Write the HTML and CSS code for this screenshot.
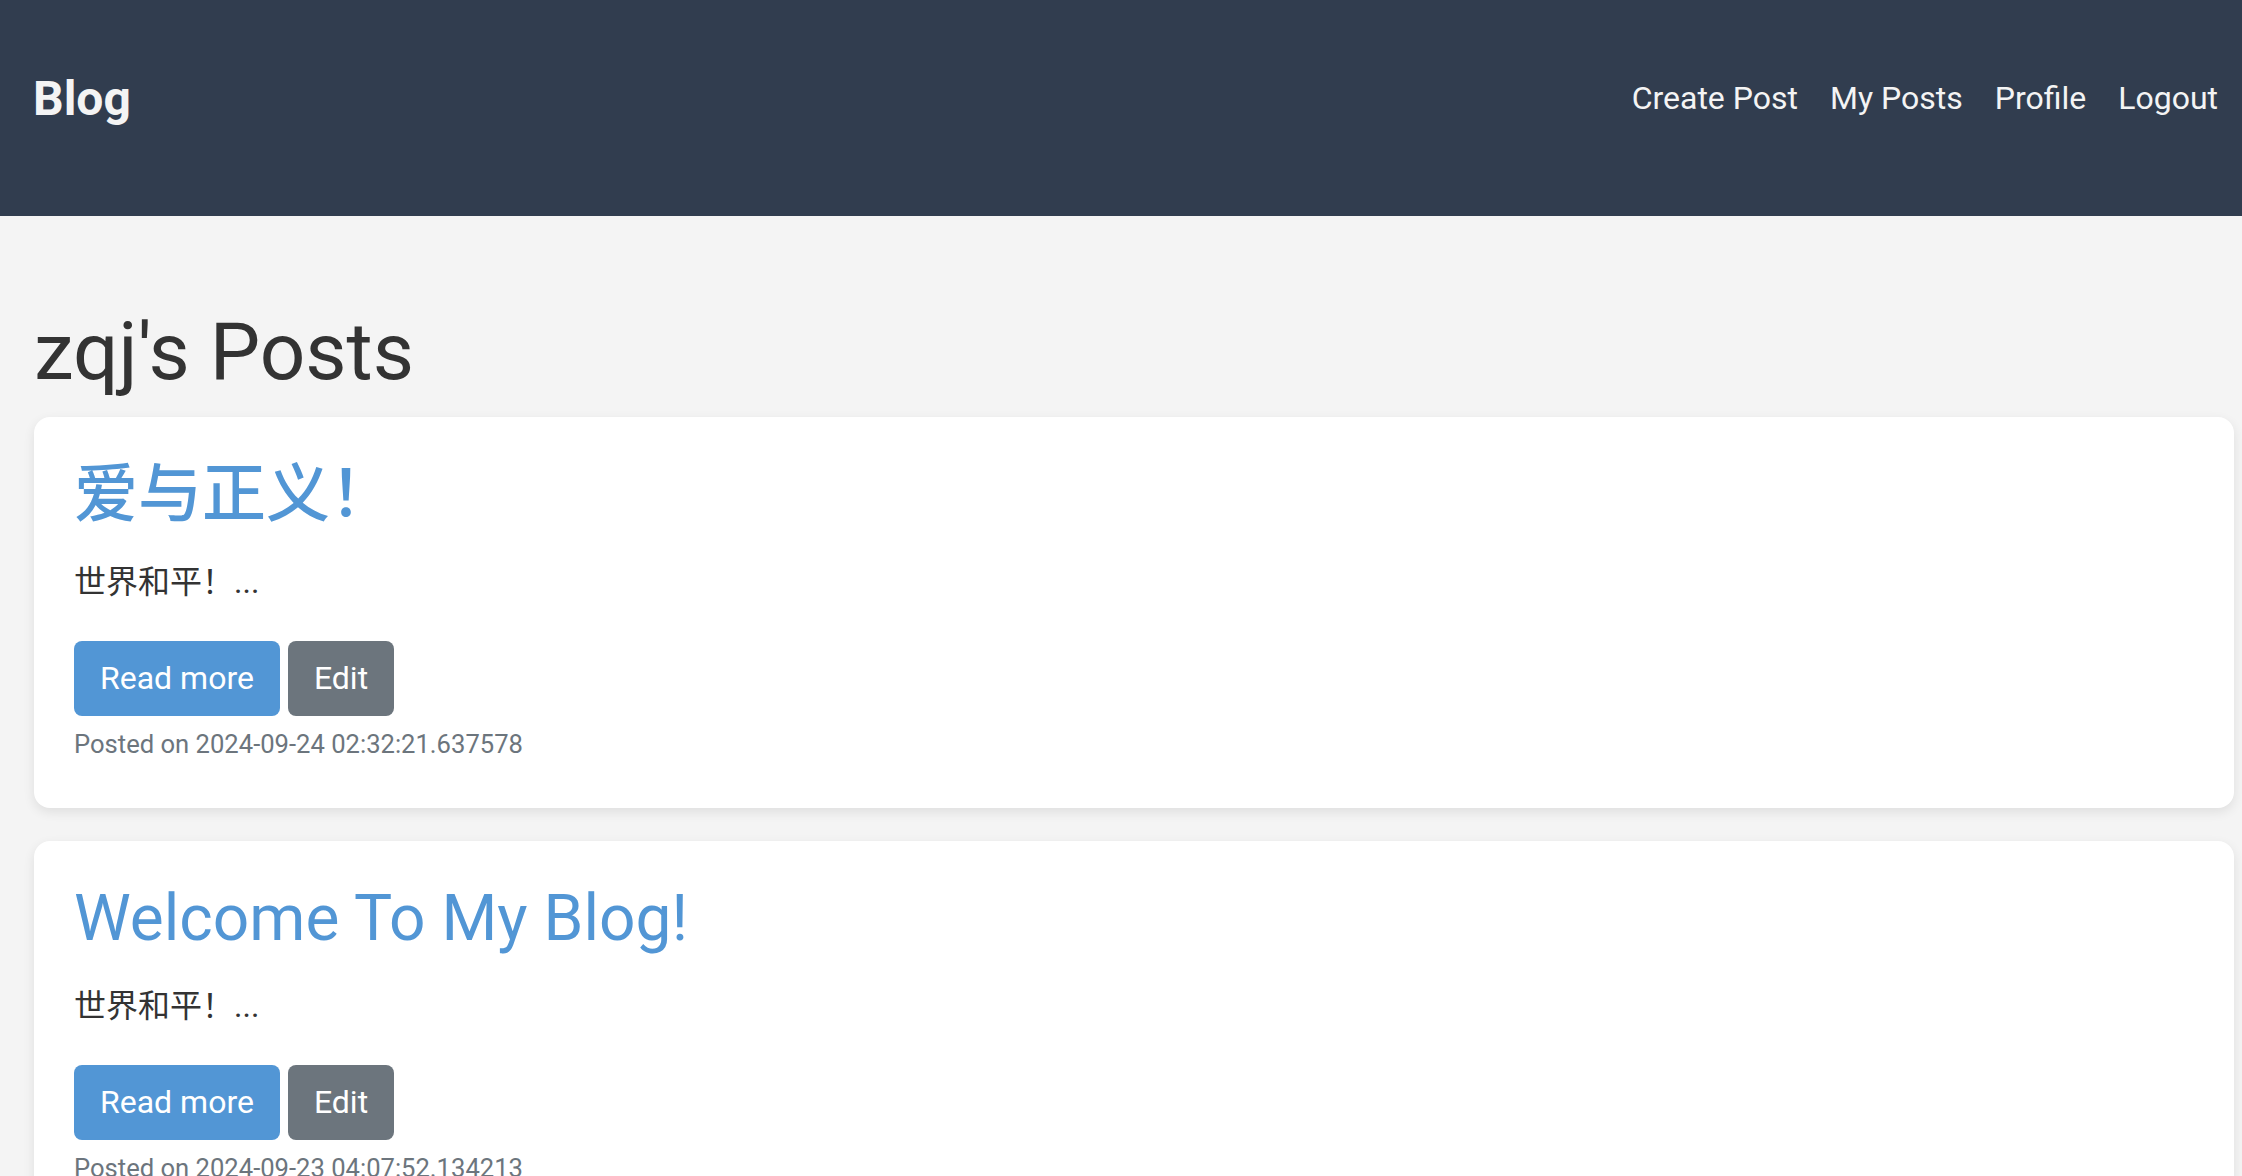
FILE: index.html
```html
<!DOCTYPE html>
<html lang="zh">
<head>
<meta charset="utf-8">
<title>Blog</title>
<link rel="stylesheet" href="styles.css">
</head>
<body>
<header class="site-header">
  <h1 class="brand">Blog</h1>
  <nav class="nav">
    <a href="#" class="nav-link">Create Post</a>
    <a href="#" class="nav-link">My Posts</a>
    <a href="#" class="nav-link">Profile</a>
    <a href="#" class="nav-link">Logout</a>
  </nav>
</header>
<main class="content">
  <h1 class="page-title">zqj's Posts</h1>
  <article class="card">
    <h2 class="card-title"><span class="cjk">爱与正义！</span></h2>
    <p class="card-text">世界和平！...</p>
    <div class="actions">
      <a href="#" class="btn btn-primary">Read more</a>
      <a href="#" class="btn btn-secondary">Edit</a>
    </div>
    <div class="meta">Posted on 2024-09-24 02:32:21.637578</div>
  </article>
  <article class="card">
    <h2 class="card-title">Welcome To My Blog!</h2>
    <p class="card-text">世界和平！...</p>
    <div class="actions">
      <a href="#" class="btn btn-primary">Read more</a>
      <a href="#" class="btn btn-secondary">Edit</a>
    </div>
    <div class="meta">Posted on 2024-09-23 04:07:52.134213</div>
  </article>
</main>
</body>
</html>
```

FILE: styles.css
```css
html, body {
  margin: 0;
  padding: 0;
}

body {
  background: #f4f4f4;
  color: #333333;
  font-family: Roboto, "Noto Sans CJK SC", sans-serif;
  font-size: 32px;
  line-height: 1.6;
}

.site-header {
  background: #313d4f;
  height: 216px;
  box-sizing: border-box;
  display: flex;
  align-items: center;
  justify-content: space-between;
  padding: 0 8px 19px 33px;
}

.brand {
  margin: 0;
  font-size: 48px;
  font-weight: 700;
  line-height: 1.2;
  color: #f4f4f4;
}

.nav {
  display: flex;
  align-items: center;
}

.nav-link {
  color: #f4f4f4;
  text-decoration: none;
  font-size: 32px;
  padding: 0 16px;
}

.content {
  padding: 0 8px 0 34px;
}

.page-title {
  margin: 88px 0 17px;
  font-size: 80px;
  font-weight: 400;
  line-height: 96px;
  color: #333333;
}

.card {
  background: #ffffff;
  border-radius: 16px;
  padding: 40px 40px 43px;
  margin-bottom: 33px;
  box-shadow: 0 4px 12px rgba(0, 0, 0, 0.09);
}

.card-title {
  margin: 0;
  font-size: 64px;
  font-weight: 400;
  line-height: 75px;
  height: 75px;
  color: #5296d5;
}

.cjk {
  font-weight: 500;
}

.card-text {
  margin: 25px 0 33px;
  line-height: 51px;
  height: 51px;
  color: #333333;
}

.actions {
  display: flex;
  gap: 8px;
}

.btn {
  display: inline-block;
  padding: 12px 26px;
  line-height: 51px;
  border-radius: 8px;
  color: #ffffff;
  text-decoration: none;
  font-size: 32px;
}

.btn-primary {
  background: #5296d5;
}

.btn-secondary {
  background: #6c757d;
}

.meta {
  margin-top: 8px;
  font-size: 25.6px;
  line-height: 41px;
  color: #6c757d;
}
```
